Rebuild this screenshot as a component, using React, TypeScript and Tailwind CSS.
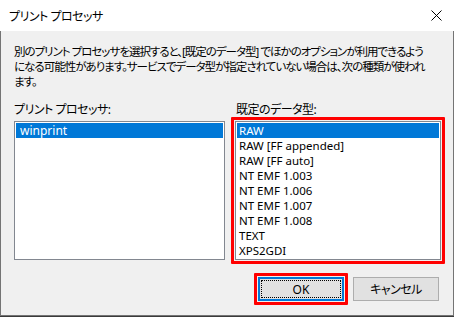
const items = [
  'RAW',
  'RAW [FF appended]',
  'RAW [FF auto]',
  'NT EMF 1.003',
  'NT EMF 1.006',
  'NT EMF 1.007',
  'NT EMF 1.008',
  'TEXT',
  'XPS2GDI',
];

const font = "font-['Noto_Sans','Noto_Sans_CJK_JP',sans-serif] [font-feature-settings:'palt']";

function App() {
  return (
    <div className={`w-[454px] h-[317px] bg-[#3a3a3a] text-[12px] leading-[15px] text-black ${font}`}>
      <div className="flex flex-col w-[454px] h-[316px]">
        {/* title bar */}
        <div className="h-[31px] bg-white flex items-center justify-between pl-[9px] pr-[11px]">
          <span className="pt-px tracking-[-0.5px]">プリント プロセッサ</span>
          <svg width="11" height="11" viewBox="0 0 11 11" className="mr-[1px]">
            <path d="M0.5 0.5 L10.5 10.5 M10.5 0.5 L0.5 10.5" stroke="#000" strokeWidth="1" />
          </svg>
        </div>

        {/* body */}
        <div className="flex-1 bg-[#f0f0f0] border-l border-r border-b border-[#747474] pl-[13px] pr-[13px] pt-[13px]">
          <p className="whitespace-nowrap text-[11.5px] tracking-[-1px]">
            別のプリント プロセッサを選択すると、[既定のデータ型] でほかのオプションが利用できるよう
            <br />
            になる可能性があります。サービスでデータ型が指定されていない場合は、次の種類が使われ
            <br />
            ます。
          </p>

          <div className="flex mt-[13px]">
            <div className="w-[211px] shrink-0">
              <div className="tracking-[-0.5px]">プリント プロセッサ:</div>
              <div className="mt-[4px] h-[139px] bg-white border border-[#828790] p-px">
                <div className="h-[15px] bg-[#0078d7] text-white pl-[4px]">winprint</div>
              </div>
            </div>

            <div className="ml-[6px] w-[214px] shrink-0">
              <div className="pl-[5px] tracking-[-0.5px]">既定のデータ型:</div>
              <div className="border-[3px] border-[#ff0000] rounded-[1px] p-px bg-[#f0f0f0]">
                <div className="h-[139px] bg-white border border-[#828790] p-px text-[11.5px]">
                  {items.map((it, i) => (
                    <div
                      key={it}
                      className={
                        i === 0
                          ? 'h-[15px] bg-[#0078d7] text-white pl-[2px] whitespace-nowrap'
                          : 'h-[15px] pl-[2px] whitespace-nowrap'
                      }
                    >
                      {it}
                    </div>
                  ))}
                </div>
              </div>
            </div>
          </div>

          <div className="flex justify-end items-start mt-[9px] pr-px">
            <div className="border-[3px] border-[#ff0000] rounded-[1px] p-px">
              <button className="w-[86px] h-[24px] bg-[#e1e1e1] border-2 border-[#0078d7] p-px flex">
                <span className="flex-1 border border-dotted border-black flex items-center justify-center">OK</span>
              </button>
            </div>
            <button className="ml-[5px] mt-[4px] w-[86px] h-[24px] bg-[#e1e1e1] border border-[#adadad] flex items-center justify-center tracking-[-0.5px]">
              キャンセル
            </button>
          </div>
        </div>
      </div>
    </div>
  );
}

export default App;
